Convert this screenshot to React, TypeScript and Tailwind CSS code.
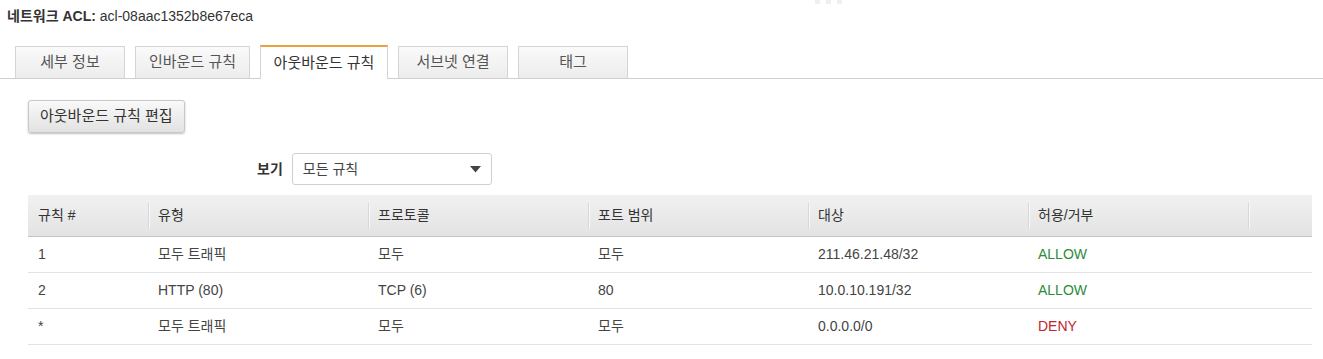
import React from 'react';

const tabs = ['세부 정보', '인바운드 규칙', '아웃바운드 규칙', '서브넷 연결', '태그'];
const tabWidths = ['w-[110px]', 'w-[115px]', 'w-[128px]', 'w-[110px]', 'w-[110px]'];

const rules = [
  { num: '1', type: '모두 트래픽', proto: '모두', port: '모두', dest: '211.46.21.48/32', action: 'ALLOW' },
  { num: '2', type: 'HTTP (80)', proto: 'TCP (6)', port: '80', dest: '10.0.10.191/32', action: 'ALLOW' },
  { num: '*', type: '모두 트래픽', proto: '모두', port: '모두', dest: '0.0.0.0/0', action: 'DENY' },
];

const headers = ['규칙 #', '유형', '프로토콜', '포트 범위', '대상', '허용/거부', ''];
const colWidths = ['w-[120px]', 'w-[220px]', 'w-[220px]', 'w-[220px]', 'w-[220px]', 'w-[220px]', 'flex-1'];

export default function App() {
  return (
    <div className="relative w-[1323px] h-[359px] bg-white text-[#444] font-['Liberation_Sans','Noto_Sans_CJK_KR',sans-serif] overflow-hidden">
      {/* faint loading dots */}
      <div className="absolute left-[815px] top-0 flex gap-[6px]">
        <span className="w-[5px] h-[4px] bg-[#efefef]" />
        <span className="w-[5px] h-[4px] bg-[#efefef]" />
        <span className="w-[5px] h-[4px] bg-[#efefef]" />
      </div>

      <div className="pl-[7px] pt-[7px] text-[14px] leading-[18px] text-[#333]">
        <span className="font-bold">네트워크 ACL:</span> acl-08aac1352b8e67eca
      </div>

      {/* tabs */}
      <div className="mt-[21px] flex items-end gap-[10px] pl-[15px] border-b border-[#cfcfcf] h-[33px]">
        {tabs.map((t, i) => {
          const active = i === 2;
          return (
            <div
              key={t}
              className={
                active
                  ? `${tabWidths[i]} h-[34px] -mb-[1px] bg-white border-t-2 border-t-[#e8a23a] border-x border-x-[#d5d5d5] flex items-center justify-center text-[15px] text-[#333]`
                  : `${tabWidths[i]} h-[32px] bg-gradient-to-b from-[#fafafa] to-[#ececec] border border-b-0 border-[#d5d5d5] flex items-center justify-center text-[15px] text-[#555]`
              }
            >
              {t}
            </div>
          );
        })}
      </div>

      <div className="pl-[28px] pt-[21px]">
        <button className="h-[33px] px-[11px] rounded-[3px] border border-[#c8c8c8] bg-gradient-to-b from-[#f9f9f9] to-[#e2e2e2] shadow-[0_1px_2px_rgba(0,0,0,0.25)] text-[15px] text-[#333]">
          아웃바운드 규칙 편집
        </button>
      </div>

      <div className="flex items-center pl-[257px] pt-[20px]">
        <span className="text-[14px] font-bold text-[#333] mr-[9px]">보기</span>
        <div className="w-[200px] h-[32px] border border-[#cfcfcf] rounded-[3px] flex items-center justify-between pl-[10px] pr-[10px] text-[14px] text-[#444]">
          <span>모든 규칙</span>
          <svg width="11" height="7" viewBox="0 0 11 7">
            <path d="M0 0 L11 0 L5.5 6.5 Z" fill="#444" />
          </svg>
        </div>
      </div>

      {/* table */}
      <div className="ml-[28px] mt-[10px] w-[1284px] text-[14px]">
        <div className="flex h-[42px] items-center bg-gradient-to-b from-[#f1f1f1] to-[#e3e3e3] border-b border-[#c4c4c4]">
          {headers.map((h, i) => (
            <div key={i} className={`${colWidths[i]} relative h-full flex items-center pl-[10px] text-[#333]`}>
              {i > 0 && <span className="absolute left-0 top-[8px] h-[26px] w-[2px] bg-[#d8d8d8] border-r border-[#f8f8f8]" />}
              {h}
            </div>
          ))}
        </div>
        {rules.map((r) => (
          <div key={r.num} className="flex h-[36px] items-center border-b border-[#e3e3e3]">
            <div className="w-[120px] pl-[10px]">{r.num}</div>
            <div className="w-[220px] pl-[10px]">{r.type}</div>
            <div className="w-[220px] pl-[10px]">{r.proto}</div>
            <div className="w-[220px] pl-[10px]">{r.port}</div>
            <div className="w-[220px] pl-[10px]">{r.dest}</div>
            <div className={`w-[220px] pl-[10px] ${r.action === 'ALLOW' ? 'text-[#2e8b3a]' : 'text-[#c0262d]'}`}>{r.action}</div>
            <div className="flex-1" />
          </div>
        ))}
      </div>
    </div>
  );
}
